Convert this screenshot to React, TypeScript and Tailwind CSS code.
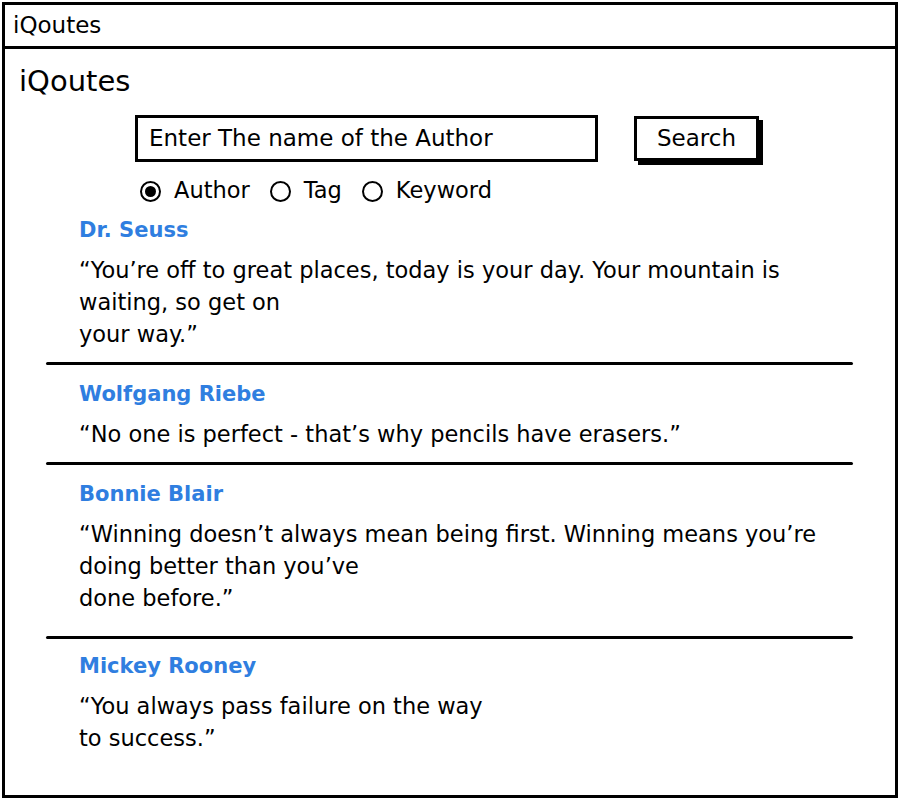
const quotes = [
  {
    author: "Dr. Seuss",
    extra: "",
    lines: [
      "“You’re off to great places, today is your day. Your mountain is",
      "waiting, so get on",
      "your way.”",
    ],
  },
  {
    author: "Wolfgang Riebe",
    extra: "pt-[13px]",
    lines: ["“No one is perfect - that’s why pencils have erasers.”"],
  },
  {
    author: "Bonnie Blair",
    extra: "pt-[13px] pb-[22px]",
    lines: [
      "“Winning doesn’t always mean being first. Winning means you’re",
      "doing better than you’ve",
      "done before.”",
    ],
  },
  {
    author: "Mickey Rooney",
    extra: "pt-[11px]",
    lines: ["“You always pass failure on the way", "to success.”"],
  },
];

const Radio = ({ label, checked }: { label: string; checked?: boolean }) => (
  <label className="flex items-center gap-[13px]">
    <span className="w-[21px] h-[21px] rounded-full border-2 border-black flex items-center justify-center">
      {checked ? <span className="w-[11px] h-[11px] rounded-full bg-black" /> : null}
    </span>
    <span>{label}</span>
  </label>
);

export default function App() {
  return (
    <div
      className="w-[900px] h-[800px] bg-white p-[2px] text-black"
      style={{ fontFamily: '"DejaVu Sans", sans-serif' }}
    >
      <div className="h-full border-[3px] border-black flex flex-col">
        <div className="h-[44px] border-b-[3px] border-black flex items-center px-[8px] text-[23px]">
          iQoutes
        </div>
        <div className="flex-1 pt-[15px]">
          <h1 className="pl-[14px] text-[29px] leading-[34px]">iQoutes</h1>
          <div className="flex items-center pl-[130px] mt-[17px] text-[23px]">
            <div className="w-[463px] h-[47px] border-[3px] border-black flex items-center px-[11px]">
              Enter The name of the Author
            </div>
            <button className="ml-[36px] w-[125px] h-[45px] border-[3px] border-black bg-white shadow-[4px_4px_0_#000] flex items-center justify-center">
              Search
            </button>
          </div>
          <div className="flex items-center gap-[20px] pl-[135px] mt-[13px] text-[22.5px] h-[32px]">
            <Radio label="Author" checked />
            <Radio label="Tag" />
            <Radio label="Keyword" />
          </div>
          <div className="mt-[7px]">
            {quotes.map((q, i) => (
              <div key={q.author}>
                {i > 0 ? <div className="ml-[41px] w-[807px] h-[3px] bg-black rounded-full" /> : null}
                <div className={`pl-[74px] pb-[12px] ${q.extra}`}>
                  <div className="text-[21px] leading-[32px] font-bold text-[#2f7ee0]">{q.author}</div>
                  <div className="mt-[8px] text-[22.5px] leading-[32px]">
                    {q.lines.map((l) => (
                      <div key={l}>{l}</div>
                    ))}
                  </div>
                </div>
              </div>
            ))}
          </div>
        </div>
      </div>
    </div>
  );
}
